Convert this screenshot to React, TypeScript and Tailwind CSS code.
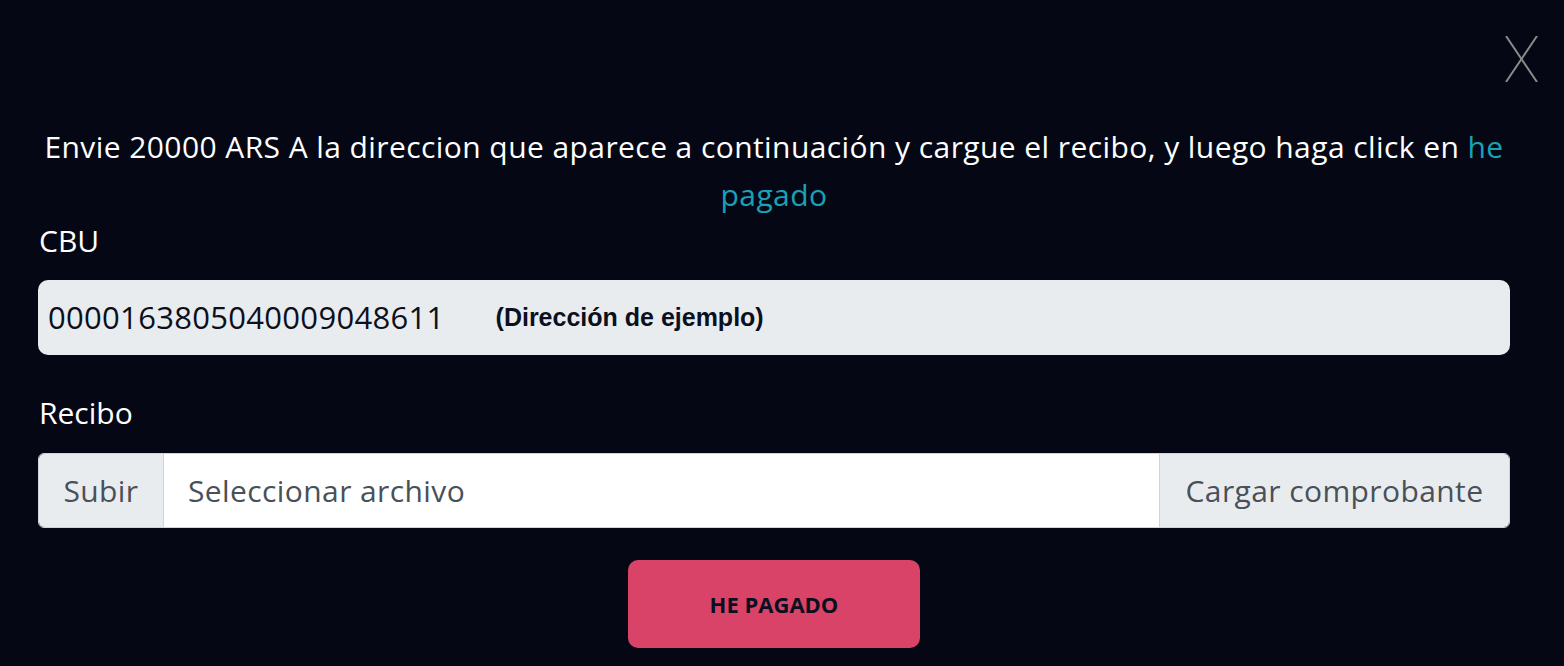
import React from "react";

export default function App() {
  const font = { fontFamily: '"Open Sans", "Noto Sans", sans-serif' };
  return (
    <div
      className="w-full h-[666px] bg-[#050814] text-white overflow-hidden flex flex-col"
      style={font}
    >
      <div className="flex justify-end pt-[36px] pr-[26px] h-[81px]">
        <button className="w-[33px] h-[46px] text-[#8b8b8b]" aria-label="Cerrar">
          <svg viewBox="0 0 33 46" className="w-[33px] h-[46px]" fill="none" stroke="currentColor" strokeWidth="2">
            <line x1="1" y1="0" x2="32" y2="46" />
            <line x1="32" y1="0" x2="1" y2="46" />
          </svg>
        </button>
      </div>

      <div className="pl-[38px] pr-[54px] mt-[42px]">
        <p className="-mx-[20px] whitespace-nowrap text-center text-[30px] leading-[48px] tracking-[0.42px] text-white">
          Envie 20000 ARS A la direccion que aparece a continuación y cargue el recibo, y luego haga click en{" "}
          <span className="text-[#17a2b8]">he</span>
          <br />
          <span className="text-[#17a2b8]">pagado</span>
        </p>

        <div className="mt-[4px] text-[30px] leading-[36px] pl-[1px]">CBU</div>

        <div className="mt-[21px] h-[75px] rounded-[10px] bg-[#e8ecef] flex items-center pl-[10px]">
          <span className="text-[31px] text-[#0b1020] tracking-[0.3px]">0000163805040009048611</span>
          <span
            className="ml-[51px] text-[25px] font-bold text-[#0b1020]"
            style={{ fontFamily: '"Liberation Sans", Arial, sans-serif' }}
          >
            (Dirección de ejemplo)
          </span>
        </div>

        <div className="mt-[40px] text-[30px] leading-[36px] pl-[1px]">Recibo</div>

        <div className="mt-[22px] h-[75px] flex rounded-[6px] border border-[#ced4da] overflow-hidden text-[30px] tracking-[0.4px] text-[#495057]">
          <div className="w-[125px] bg-[#e9ecef] border-r border-[#ced4da] flex items-center justify-center">
            Subir
          </div>
          <div className="flex-1 bg-white flex items-center pl-[24px]">Seleccionar archivo</div>
          <div className="w-[350px] bg-[#e9ecef] border-l border-[#ced4da] flex items-center justify-center">
            Cargar comprobante
          </div>
        </div>

        <div className="mt-[32px] flex justify-center">
          <button className="w-[292px] h-[88px] rounded-[10px] bg-[#d94368] text-[#0b1020] font-bold text-[22px]">
            HE PAGADO
          </button>
        </div>
      </div>
    </div>
  );
}
